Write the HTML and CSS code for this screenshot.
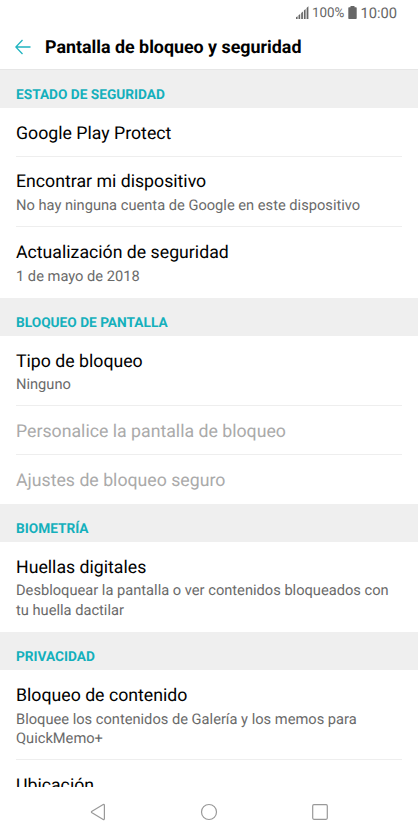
FILE: index.html
```html
<!DOCTYPE html>
<html lang="es">
<head>
<meta charset="utf-8">
<title>Pantalla de bloqueo y seguridad</title>
<link rel="stylesheet" href="styles.css">
</head>
<body>
<div class="status">
  <svg class="signal" width="13" height="13" viewBox="0 0 13 13"><path d="M0 11.3l1.6-1V13H0zM2.5 9.3l1.7-1.4V13H2.5zM5.2 7l1.7-1.6V13H5.2zM7.9 4.6L9.6 3v10H7.9zM10.6 2l1.8-1.7V13h-1.8z"/></svg>
  <span class="percent">100%</span>
  <svg class="battery" width="9" height="13" viewBox="0 0 9 13"><path d="M2.5 0h4v1.3h1.5q.7 0 .7.7v10.2q0 .8-.7.8H1q-.7 0-.7-.8V2q0-.7.7-.7h1.5z"/></svg>
  <span class="clock">10:00</span>
</div>
<header class="header">
  <svg class="back" width="16" height="16" viewBox="0 0 16 16"><path d="M15.5 8H1M7.5 1L.8 8l6.7 7"/></svg>
  <h1>Pantalla de bloqueo y seguridad</h1>
</header>
<main class="list">
  <h2>ESTADO DE SEGURIDAD</h2>
  <section>
    <div class="item"><div class="title">Google Play Protect</div></div>
    <div class="item"><div class="title">Encontrar mi dispositivo</div><div class="sub">No hay ninguna cuenta de Google en este dispositivo</div></div>
    <div class="item"><div class="title">Actualización de seguridad</div><div class="sub">1 de mayo de 2018</div></div>
  </section>
  <h2>BLOQUEO DE PANTALLA</h2>
  <section>
    <div class="item"><div class="title">Tipo de bloqueo</div><div class="sub">Ninguno</div></div>
    <div class="item disabled"><div class="title">Personalice la pantalla de bloqueo</div></div>
    <div class="item disabled"><div class="title">Ajustes de bloqueo seguro</div></div>
  </section>
  <h2>BIOMETRÍA</h2>
  <section>
    <div class="item"><div class="title">Huellas digitales</div><div class="sub">Desbloquear la pantalla o ver contenidos bloqueados con tu huella dactilar</div></div>
  </section>
  <h2>PRIVACIDAD</h2>
  <section>
    <div class="item"><div class="title">Bloqueo de contenido</div><div class="sub">Bloquee los contenidos de Galería y los memos para QuickMemo+</div></div>
    <div class="item"><div class="title">Ubicación</div></div>
  </section>
</main>
<nav class="nav">
  <svg width="16" height="18" viewBox="0 0 16 18"><path d="M13.2 1.6q1.2-.6 1.2.8v13.2q0 1.4-1.2.8L2 9.8q-1.2-.8 0-1.6z"/></svg>
  <svg width="18" height="18" viewBox="0 0 18 18"><circle cx="9" cy="9" r="7.5"/></svg>
  <svg width="16" height="16" viewBox="0 0 16 16"><rect x=".7" y=".7" width="14.6" height="14.6" rx="1.2"/></svg>
</nav>
</body>
</html>
```
FILE: styles.css
```css
* { box-sizing: border-box; }
body { margin: 0; height: 836px; display: flex; flex-direction: column; overflow: hidden; background: #fff; font-family: Roboto, sans-serif; color: #000; text-rendering: geometricPrecision; }
.status { height: 25px; flex: none; display: flex; justify-content: flex-end; align-items: center; padding-right: 21px; color: #666; }
.status svg { fill: #666; }
.percent { font-size: 13.4px; margin: 0 4px 0 3px; padding-top: 1px; }
.clock { font-size: 14.7px; margin-left: 3px; }
.header { height: 44.6px; flex: none; display: flex; align-items: center; padding: 1px 0 0 15px; border-bottom: 1px solid #e6e6e6; }
.back { fill: none; stroke: #1fb4c0; stroke-width: 1.3; position: relative; top: -0.5px; }
h1 { margin: 0 0 0 14px; padding-top: 1px; font-size: 17.85px; line-height: 24px; font-weight: 700; white-space: nowrap; }
.list { height: 717.4px; flex: none; overflow: hidden; }
h2 { margin: 0; height: 38.3px; padding: 16px 16px 0; background: #efefef; color: #14b0bc; font-size: 13.7px; line-height: 18px; font-weight: 700; }
.item { margin: 0 16px; padding: 13.9px 0 9.8px; border-bottom: 1px solid #eee; }
.item:last-child { border-bottom-color: transparent; }
.title { font-size: 17.72px; line-height: 24px; white-space: nowrap; }
.sub { max-width: 380px; font-size: 14.67px; line-height: 19.4px; color: #6a6a6a; margin: 1.6px 0 0.8px; }
.disabled { color: #aaa; }
.nav { flex: 1; display: flex; justify-content: space-between; align-items: center; padding: 1px 90px 0; }
.nav svg { fill: none; stroke: #999; stroke-width: 1.2; }
```
